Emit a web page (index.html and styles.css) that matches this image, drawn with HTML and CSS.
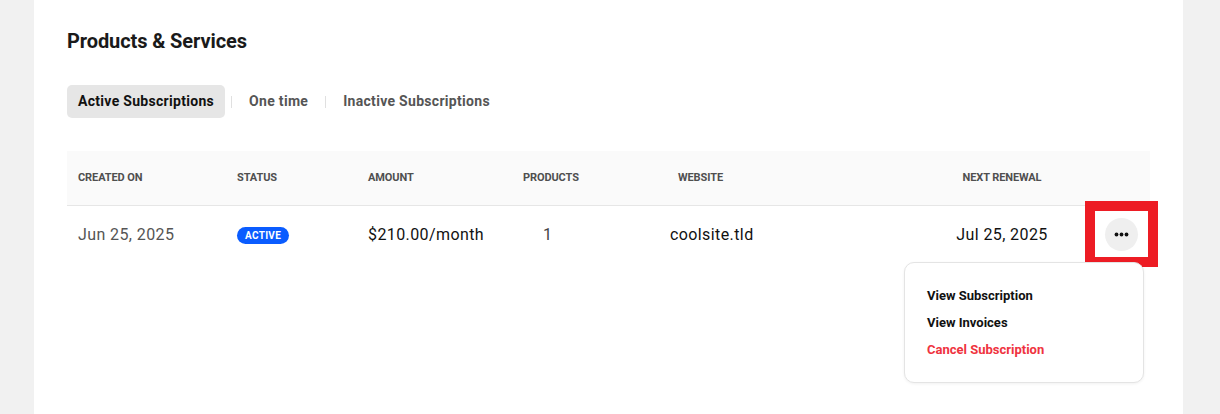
FILE: index.html
```html
<!DOCTYPE html>
<html lang="en">
<head>
<meta charset="utf-8">
<title>Products &amp; Services</title>
<link rel="stylesheet" href="styles.css">
</head>
<body>
<main class="card">
  <h1 class="title">Products &amp; Services</h1>
  <nav class="tabs">
    <a class="tab tab-active">Active Subscriptions</a>
    <span class="tab-sep"></span>
    <a class="tab">One time</a>
    <span class="tab-sep"></span>
    <a class="tab">Inactive Subscriptions</a>
  </nav>
  <div class="table">
    <div class="thead">
      <div class="th c1">Created On</div>
      <div class="th c2">Status</div>
      <div class="th c3">Amount</div>
      <div class="th c4">Products</div>
      <div class="th c5">Website</div>
      <div class="th c6">Next Renewal</div>
      <div class="th c7"></div>
    </div>
    <div class="trow">
      <div class="td c1 muted">Jun 25, 2025</div>
      <div class="td c2"><span class="badge">ACTIVE</span></div>
      <div class="td c3">$210.00/month</div>
      <div class="td c4 num">1</div>
      <div class="td c5 site">coolsite.tld</div>
      <div class="td c6">Jul 25, 2025</div>
      <div class="td c7 actions">
        <button class="more" aria-label="More">
          <svg width="15" height="5" viewBox="0 0 15 5"><circle cx="2.5" cy="2.5" r="1.9" fill="#111"/><circle cx="7.5" cy="2.5" r="1.9" fill="#111"/><circle cx="12.5" cy="2.5" r="1.9" fill="#111"/></svg>
        </button>
        <span class="highlight"></span>
        <div class="menu">
          <a class="menu-item">View Subscription</a>
          <a class="menu-item">View Invoices</a>
          <a class="menu-item danger">Cancel Subscription</a>
        </div>
      </div>
    </div>
  </div>
</main>
</body>
</html>
```
FILE: styles.css
```css
* { box-sizing: border-box; }
html, body { margin: 0; padding: 0; }
body {
  background: #f1f1f1;
  font-family: Roboto, "Liberation Sans", Arial, sans-serif;
  color: #111;
  width: 1220px;
  height: 414px;
  overflow: hidden;
}
.card {
  margin-left: 34px;
  width: 1149px;
  height: 414px;
  background: #fff;
  padding: 29px 33px 0 33px;
}
.title {
  margin: 0;
  font-size: 20px;
  line-height: 24px;
  font-weight: 700;
  color: #1a1a1a;
  letter-spacing: -0.1px;
}
.tabs {
  margin-top: 32px;
  display: flex;
  align-items: center;
  height: 33px;
}
.tab {
  font-size: 14px;
  font-weight: 700;
  letter-spacing: 0.3px;
  color: #555;
  padding: 0 11px;
  height: 33px;
  line-height: 33px;
  border-radius: 5px;
}
.tab-active {
  background: #e6e6e6;
  color: #111;
}
.tab-sep {
  width: 1px;
  height: 12px;
  background: #e0e0e0;
  margin: 0 6px;
}
.table {
  margin-top: 33px;
  width: 1083px;
}
.thead, .trow {
  display: grid;
  grid-template-columns: 159px 131px 155px 145px 255px 180px 58px;
  align-items: center;
}
.thead {
  height: 55px;
  background: #fafafa;
  border-bottom: 1px solid #e6e6e6;
  padding-bottom: 2px;
}
.th {
  font-size: 11px;
  font-weight: 700;
  text-transform: uppercase;
  color: #4f4f4f;
  padding-left: 11px;
  letter-spacing: -0.1px;
}
.trow { height: 58px; padding-bottom: 2px; }
.td {
  font-size: 16px;
  letter-spacing: 0.4px;
  color: #111;
  padding-left: 11px;
}
.c6 { text-align: center; padding-left: 0; }
.th.c5 { padding-left: 21px; }
.td.c5 { padding-left: 13px; }
.td.num { padding-left: 31px; color: #444; }
.muted { color: #555; }
.badge {
  display: inline-block;
  background: #0a5cff;
  color: #fff;
  font-size: 10px;
  font-weight: 700;
  letter-spacing: 0.3px;
  height: 17px;
  line-height: 17px;
  padding: 0 8px;
  border-radius: 9px;
  vertical-align: middle;
}
.actions {
  position: relative;
  padding-left: 13px;
  height: 56px;
  display: flex;
  align-items: center;
}
.more {
  width: 33px;
  height: 33px;
  border-radius: 50%;
  border: none;
  background: #efefef;
  display: flex;
  align-items: center;
  justify-content: center;
  padding: 0;
}
.more svg { display: block; }
.highlight {
  position: absolute;
  left: -7px;
  top: -5px;
  width: 73px;
  height: 66px;
  border: 10px solid #ed1c24;
  pointer-events: none;
}
.menu {
  position: absolute;
  left: -188px;
  top: 56px;
  width: 240px;
  height: 121px;
  background: #fff;
  border: 1px solid #e4e4e4;
  border-radius: 10px;
  box-shadow: 0 1px 3px rgba(0,0,0,0.06);
  padding: 19px 0 0 22px;
  display: flex;
  flex-direction: column;
  z-index: 2;
  letter-spacing: 0;
}
.menu-item {
  font-size: 13px;
  font-weight: 700;
  line-height: 27px;
  letter-spacing: 0;
  color: #111;
}
.menu-item.danger { color: #ef3340; }
```
